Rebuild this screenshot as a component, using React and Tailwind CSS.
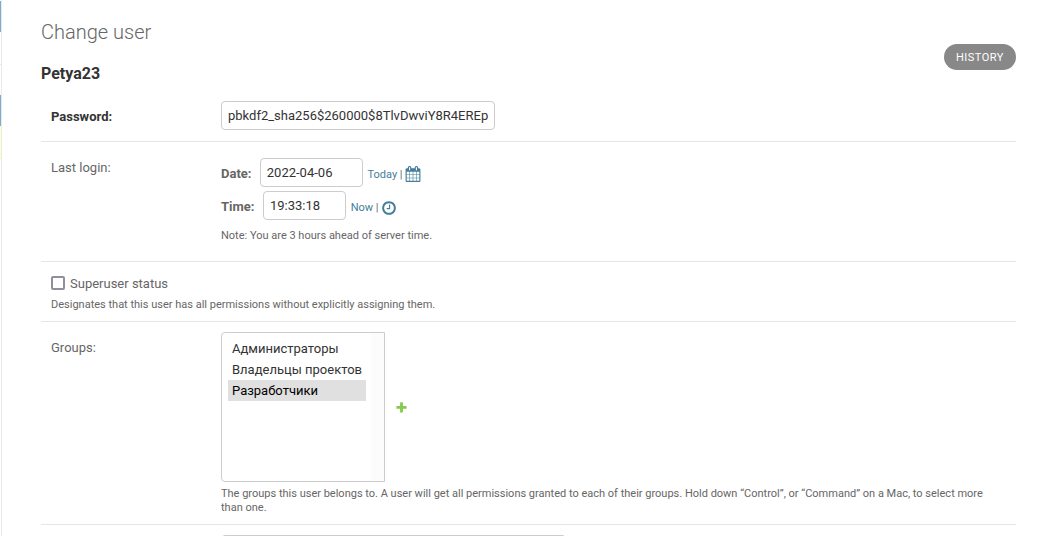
import React from "react";

function CalendarIcon() {
  return (
    <svg className="mb-0.5 block size-4" viewBox="0 0 1792 1792" fill="#447e9b">
      <path d="M192 1664h288v-288h-288v288zm352 0h320v-288h-320v288zm-352-352h288v-320h-288v320zm352 0h320v-320h-320v320zm-352-384h288v-288h-288v288zm736 736h320v-288h-320v288zm-384-736h320v-288h-320v288zm768 736h288v-288h-288v288zm-384-352h320v-320h-320v320zm-352-864v-288q0-13-9.5-22.5t-22.5-9.5h-64q-13 0-22.5 9.5t-9.5 22.5v288q0 13 9.5 22.5t22.5 9.5h64q13 0 22.5-9.5t9.5-22.5zm736 864h288v-320h-288v320zm-384-384h320v-288h-320v288zm384 0h288v-288h-288v288zm32-480v-288q0-13-9.5-22.5t-22.5-9.5h-64q-13 0-22.5 9.5t-9.5 22.5v288q0 13 9.5 22.5t22.5 9.5h64q13 0 22.5-9.5t9.5-22.5zm384-64v1280q0 52-38 90t-90 38h-1408q-52 0-90-38t-38-90v-1280q0-52 38-90t90-38h128v-96q0-66 47-113t113-47h64q66 0 113 47t47 113v96h384v-96q0-66 47-113t113-47h64q66 0 113 47t47 113v96h128q52 0 90 38t38 90z" />
    </svg>
  );
}

function ClockIcon() {
  return (
    <svg className="ml-[0.8px] block size-4" viewBox="0 0 1792 1792" fill="#447e9b">
      <path d="M1024 544v448q0 14-9 23t-23 9h-320q-14 0-23-9t-9-23v-64q0-14 9-23t23-9h224v-352q0-14 9-23t23-9h64q14 0 23 9t9 23zm416 352q0-148-73-273t-198-198-273-73-273 73-198 198-73 273 73 273 198 198 273 73 273-73 198-198 73-273zm224 0q0 209-103 385.5t-279.5 279.5-385.5 103-385.5-103-279.5-279.5-103-385.5 103-385.5 279.5-279.5 385.5-103 385.5 103 279.5 279.5 103 385.5z" />
    </svg>
  );
}

function PlusIcon() {
  return (
    <svg className="block size-[13px]" viewBox="0 0 1792 1792" fill="#85ca4b">
      <path d="M1600 796v192q0 40-28 68t-68 28h-416v416q0 40-28 68t-68 28h-192q-40 0-68-28t-28-68v-416h-416q-40 0-68-28t-28-68v-192q0-40 28-68t68-28h416v-416q0-40 28-68t68-28h192q40 0 68 28t28 68v416h416q40 0 68 28t28 68z" />
    </svg>
  );
}

function TextBox({ className, children }) {
  return (
    <div className={"h-[29px] rounded border border-[#ccc] px-1.5 text-[13px] leading-[27px] whitespace-nowrap text-[#333] " + className}>
      {children}
    </div>
  );
}

function Shortcut({ label, children }) {
  return (
    <div className="ml-[4.7px] flex h-[33px] items-center text-[11px] leading-4">
      <a className="text-[#447e9b]">{label}</a>
      <span className="mr-[2px] whitespace-pre"> |</span>
      {children}
    </div>
  );
}

function SidebarEdge() {
  return (
    <div className="flex h-full w-[2px] shrink-0 border-r border-[#eaeaea]">
      <div className="w-px pt-px">
        <div className="h-[31px] bg-[#79aec8]" />
        <div className="h-[33px] border-b border-[#eaeaea]" />
        <div className="h-[29px]" />
        <div className="mt-px h-[31px] bg-[#79aec8]" />
        <div className="h-[33px] border-b border-[#eaeaea] bg-[#ffffcc]" />
      </div>
    </div>
  );
}

export default function App() {
  return (
    <div className="flex h-[536px] w-[1057px] overflow-hidden bg-white font-['Roboto',sans-serif] text-[13px] text-[#666]">
      <SidebarEdge />
      <main className="ml-[39px] w-[975px]">
        <header className="flex h-[91px] justify-between">
          <div>
            <h1 className="mt-5 text-xl leading-6 font-light">Change user</h1>
            <h2 className="mt-5 text-base leading-5 font-bold text-[#333]">Petya23</h2>
          </div>
          <a className="mt-11 h-[26px] w-[72px] rounded-full bg-[#888] pt-px text-center text-[11px] leading-[26px] tracking-[0.5px] text-white">
            HISTORY
          </a>
        </header>

        <section className="flex h-[51px] border-b border-[#e6e6e6] px-2.5 pt-2.5">
          <div className="w-[170px] leading-[31px] font-bold text-[#333]">Password:</div>
          <TextBox className="w-[274px]">pbkdf2_sha256$260000$8TlvDwviY8R4EREp</TextBox>
        </section>

        <section className="flex h-[120px] border-b border-[#e6e6e6] px-2.5 pt-4">
          <div className="w-[170px] leading-5">Last login:</div>
          <div>
            <div className="flex h-[31px]">
              <b className="mr-[8.3px] leading-[31px]">Date:</b>
              <TextBox className="w-[103px]">2022-04-06</TextBox>
              <Shortcut label="Today"><CalendarIcon /></Shortcut>
            </div>
            <div className="mt-0.5 flex h-[31px]">
              <b className="mr-[8.5px] leading-[31px]">Time:</b>
              <TextBox className="w-[83px]">19:33:18</TextBox>
              <Shortcut label="Now"><ClockIcon /></Shortcut>
            </div>
            <p className="mt-[7px] text-[11px] leading-[14px]">Note: You are 3 hours ahead of server time.</p>
          </div>
        </section>

        <section className="h-[60px] border-b border-[#e6e6e6] px-2.5 pt-[11px]">
          <label className="flex h-5 items-start leading-[22px]">
            <span className="mt-[3px] mr-[5px] size-3.5 rounded-[2px] border-2 border-[#8f8f9d]" />
            Superuser status
          </label>
          <p className="mt-[5px] text-[11px] leading-[14px]">
            Designates that this user has all permissions without explicitly assigning them.
          </p>
        </section>

        <section className="flex h-[203px] border-b border-[#e6e6e6] px-2.5 pt-2.5">
          <div className="w-[170px] shrink-0 pt-1.5 leading-5">Groups:</div>
          <div>
            <div className="flex items-center">
              <div className="flex h-[150px] w-[164px] rounded-l border border-[#ccc] text-[13px] leading-[21px] text-[#333]">
                <ul className="mt-[5px] mr-[5px] ml-1.5 w-[138px] whitespace-nowrap">
                  <li className="pl-1">Администраторы</li>
                  <li className="pl-1">Владельцы проектов</li>
                  <li className="bg-[#e0e0e0] pl-1 text-black">Разработчики</li>
                </ul>
                <div className="grow bg-[#fcfcfc]" />
              </div>
              <a className="ml-2.5 pt-px"><PlusIcon /></a>
            </div>
            <p className="mt-[5px] w-[785px] text-[11px] leading-[14px]">
              The groups this user belongs to. A user will get all permissions granted to each of their groups. Hold down “Control”, or “Command” on a Mac, to select more than one.
            </p>
          </div>
        </section>

        <section className="flex pt-2.5 pl-[180px]">
          <div className="h-[150px] w-[343px] rounded-l border border-[#ccc]" />
        </section>
      </main>
    </div>
  );
}
